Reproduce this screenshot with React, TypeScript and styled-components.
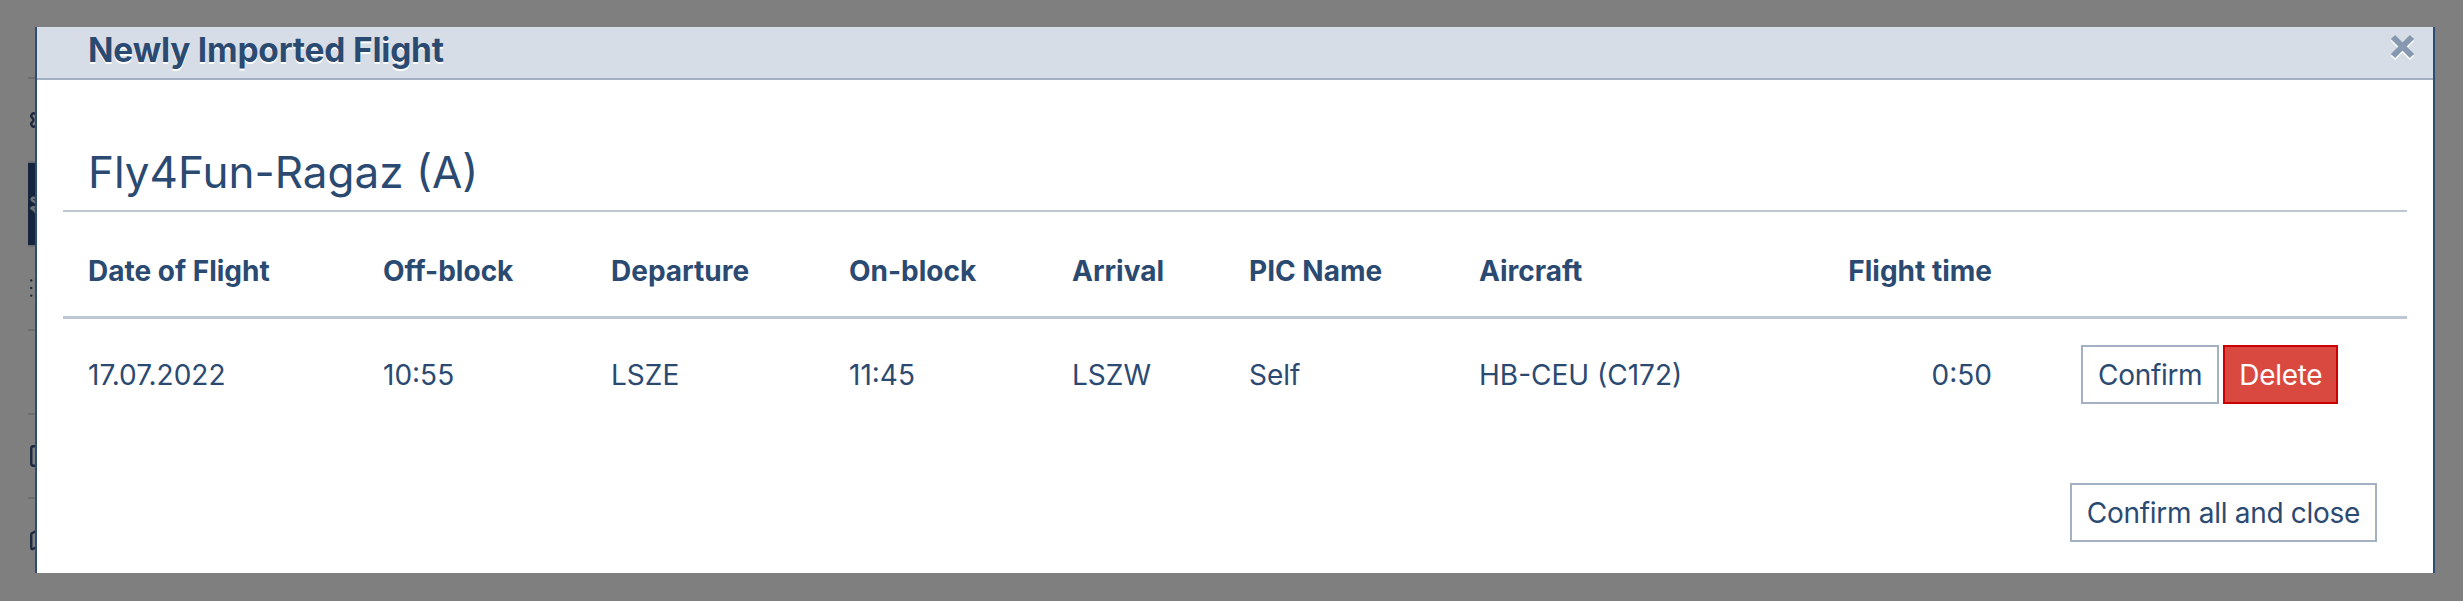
import styled, { createGlobalStyle } from 'styled-components';
import { Plane, List, ChevronRight, SquarePen, Map, Settings } from 'lucide-react';

const GlobalStyle = createGlobalStyle`
  html, body {
    margin: 0;
    padding: 0;
    background: #ffffff;
    font-family: Inter, "Noto Sans", "Liberation Sans", sans-serif;
  }
  * {
    box-sizing: border-box;
  }
`;

type Flight = {
  id: number;
  date: string;
  offBlock: string;
  departure: string;
  onBlock: string;
  arrival: string;
  pic: string;
  aircraft: string;
  flightTime: string;
};

const flights: Flight[] = [
  {
    id: 1,
    date: '17.07.2022',
    offBlock: '10:55',
    departure: 'LSZE',
    onBlock: '11:45',
    arrival: 'LSZW',
    pic: 'Self',
    aircraft: 'HB-CEU (C172)',
    flightTime: '0:50',
  },
];

const sideItems = [
  { icon: Settings, active: false },
  { icon: Plane, active: true },
  { icon: List, active: false },
  { icon: ChevronRight, active: false },
  { icon: SquarePen, active: false },
  { icon: Map, active: false },
];

const App = () => {
  return (
    <>
      <GlobalStyle />
      <Page>
        <Sidebar>
          <SideTop />
          {sideItems.map(({ icon: Icon, active }, i) => (
            <SideItem key={i} $active={active}>
              <Icon size={26} strokeWidth={2.2} />
            </SideItem>
          ))}
        </Sidebar>
      </Page>
      <Backdrop />
      <Modal>
        <ModalHeader>
          <ModalTitle>Newly Imported Flight</ModalTitle>
          <CloseButton aria-label="Close">
            <svg width="27" height="27" viewBox="0 0 27 27">
              <path d="M4 4 L23 23 M23 4 L4 23" stroke="#8598af" strokeWidth="6" />
            </svg>
          </CloseButton>
        </ModalHeader>
        <ModalBody>
          <ClubTitle>Fly4Fun-Ragaz (A)</ClubTitle>
          <FlightTable>
            <HeadCell>Date of Flight</HeadCell>
            <HeadCell>Off-block</HeadCell>
            <HeadCell>Departure</HeadCell>
            <HeadCell>On-block</HeadCell>
            <HeadCell>Arrival</HeadCell>
            <HeadCell>PIC Name</HeadCell>
            <HeadCell>Aircraft</HeadCell>
            <HeadCell $right>Flight time</HeadCell>
            <HeadCell />
            {flights.map((f) => (
              <Row key={f.id}>
                <Cell>{f.date}</Cell>
                <Cell>{f.offBlock}</Cell>
                <Cell>{f.departure}</Cell>
                <Cell>{f.onBlock}</Cell>
                <Cell>{f.arrival}</Cell>
                <Cell>{f.pic}</Cell>
                <Cell>{f.aircraft}</Cell>
                <Cell $right>{f.flightTime}</Cell>
                <ActionCell>
                  <Button>Confirm</Button>
                  <Button $danger>Delete</Button>
                </ActionCell>
              </Row>
            ))}
          </FlightTable>
        </ModalBody>
        <ModalFooter>
          <Button>Confirm all and close</Button>
        </ModalFooter>
      </Modal>
    </>
  );
};

export default App;

const Page = styled.div`
  display: flex;
  height: 601px;
  background: #ffffff;
`;

const Sidebar = styled.nav`
  width: 90px;
  padding-left: 28px;
  display: flex;
  flex-direction: column;
`;

const SideTop = styled.div`
  height: 77px;
`;

const SideItem = styled.div<{ $active?: boolean }>`
  height: 84px;
  border-top: 2px solid #dddddd;
  display: flex;
  align-items: center;
  background: ${(p) => (p.$active ? '#284a7a' : 'transparent')};
  color: ${(p) => (p.$active ? '#dfe6ef' : '#36547f')};
`;

const Backdrop = styled.div`
  position: fixed;
  inset: 0;
  background: rgba(0, 0, 0, 0.5);
`;

const Modal = styled.div`
  position: absolute;
  top: 27px;
  left: 35px;
  width: 2400px;
  height: 546px;
  background: #ffffff;
  border-left: 2px solid #2d4b73;
  border-right: 2px solid #2d4b73;
  display: flex;
  flex-direction: column;
  color: #2b4a72;
`;

const ModalHeader = styled.div`
  height: 53px;
  background: #d6dde6;
  border-bottom: 2px solid #a2b0c2;
  display: flex;
  justify-content: space-between;
  align-items: center;
  padding: 0 17px 0 51px;
`;

const ModalTitle = styled.h4`
  margin: 0 0 5px;
  font-size: 33.5px;
  font-weight: 700;
  line-height: 40px;
  letter-spacing: -0.2px;
  text-shadow: 0 2px 0 #ffffff;
`;

const CloseButton = styled.button`
  align-self: flex-start;
  margin-top: 6px;
  padding: 0;
  border: none;
  background: none;
  line-height: 0;
  cursor: pointer;
  filter: drop-shadow(0 2px 0 #ffffff);
`;

const ModalBody = styled.div`
  padding: 0 26px;
`;

const ClubTitle = styled.h2`
  margin: 65px 0 0;
  padding: 0 25px 11px;
  font-size: 44px;
  font-weight: 400;
  line-height: 54px;
  border-bottom: 2px solid #bdc7d3;
`;

const FlightTable = styled.div`
  display: grid;
  grid-template-columns: 295px 228px 238px 223px 177px 230px 1fr 230px 390px;
  font-size: 28px;
  line-height: 34px;
`;

const Row = styled.div`
  display: contents;
`;

const HeadCell = styled.div<{ $right?: boolean }>`
  padding: 42px 25px 28px;
  font-weight: 700;
  text-align: ${(p) => (p.$right ? 'right' : 'left')};
  border-bottom: 3px solid #bdc7d3;
  white-space: nowrap;
`;

const Cell = styled.div<{ $right?: boolean }>`
  padding: 26px 25px;
  display: flex;
  align-items: center;
  justify-content: ${(p) => (p.$right ? 'flex-end' : 'flex-start')};
  white-space: nowrap;
`;

const ActionCell = styled.div`
  padding: 26px 0 26px 64px;
  display: flex;
  gap: 4px;
  align-items: center;
`;

const Button = styled.button<{ $danger?: boolean }>`
  height: 59px;
  padding: 0 ${(p) => (p.$danger ? 14 : 15)}px;
  font-family: inherit;
  font-size: 28px;
  line-height: 34px;
  letter-spacing: -0.3px;
  border: 2px solid ${(p) => (p.$danger ? '#cc0000' : '#a3b1c3')};
  background: ${(p) => (p.$danger ? '#d9493f' : '#ffffff')};
  color: ${(p) => (p.$danger ? '#ffffff' : '#2b4a72')};
  border-radius: 0;
  cursor: pointer;
`;

const ModalFooter = styled.div`
  display: flex;
  justify-content: flex-end;
  padding: 53px 56px 0 0;
`;
